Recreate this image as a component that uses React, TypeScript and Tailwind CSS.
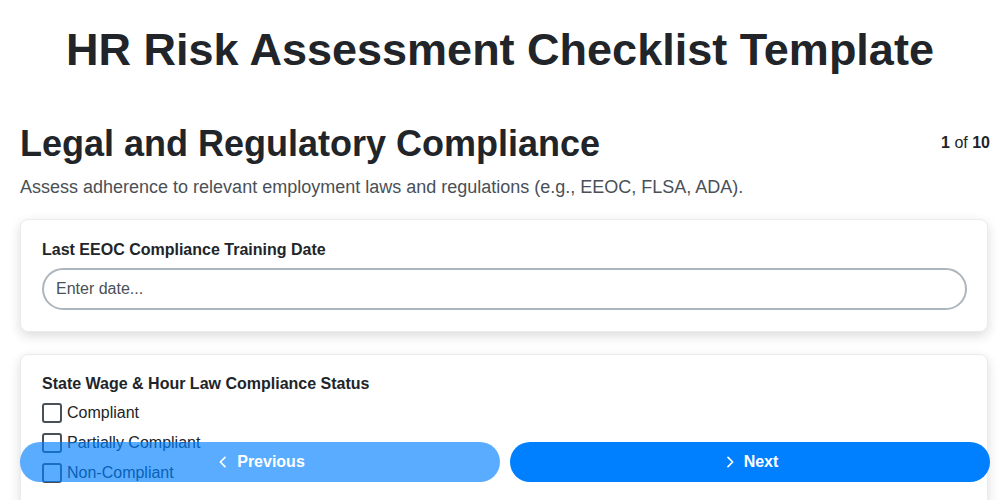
import React from "react";

function Chevron({ dir }: { dir: "left" | "right" }) {
  return (
    <svg width="16" height="16" viewBox="0 0 24 24" fill="none" stroke="currentColor" strokeWidth="2.5" strokeLinecap="round" strokeLinejoin="round">
      {dir === "left" ? <path d="M15 5l-7 7 7 7" /> : <path d="M9 5l7 7-7 7" />}
    </svg>
  );
}

export default function App() {
  const options = ["Compliant", "Partially Compliant", "Non-Compliant"];
  return (
    <div className="min-h-[500px] bg-white text-[#212529]" style={{ fontFamily: '"Liberation Sans", Arial, sans-serif' }}>
      <h1 className="pt-[23px] text-center text-[45px] font-bold leading-[54px]">HR Risk Assessment Checklist Template</h1>
      <div className="pl-5 pr-[10px]">
        <div className="mt-[45px] flex items-start justify-between">
          <h2 className="text-[36px] font-bold leading-[44px]">Legal and Regulatory Compliance</h2>
          <div className="mt-[11px] text-[16px] leading-[20px]">
            <span className="font-bold">1</span> of <span className="font-bold">10</span>
          </div>
        </div>
        <p className="mt-[9px] text-[18px] leading-[24px] text-[#495057]">
          Assess adherence to relevant employment laws and regulations (e.g., EEOC, FLSA, ADA).
        </p>
        <div className="mt-[20px] mr-[2px] rounded-lg border border-[#e9ecef] bg-white pl-[21px] pr-5 pb-[21px] pt-[18px] shadow-[0_4px_12px_rgba(0,0,0,0.14)]">
          <label className="block text-[16px] font-bold leading-[24px]">Last EEOC Compliance Training Date</label>
          <input
            type="text"
            placeholder="Enter date..."
            className="mt-[6px] block h-[42px] w-full rounded-full border-2 border-[#adb5bd] bg-white px-3 text-[16px] text-[#212529] outline-none placeholder:text-[#495057]"
          />
        </div>
        <div className="mt-[22px] mr-[2px] rounded-lg border border-[#e9ecef] bg-white pl-[21px] pr-5 pb-5 pt-[17px] shadow-[0_4px_12px_rgba(0,0,0,0.14)]">
          <div className="text-[16px] font-bold leading-[24px]">State Wage &amp; Hour Law Compliance Status</div>
          <div className="mt-0.5 flex flex-col">
            {options.map((o) => (
              <label key={o} className="flex h-[30px] items-center gap-[5px] text-[16px]">
                <span className="block h-[20px] w-[20px] rounded-[3px] border-2 border-[#495057] bg-white" />
                <span>{o}</span>
              </label>
            ))}
          </div>
        </div>
        <div className="h-40" />
      </div>
      <div className="fixed bottom-[18px] left-5 right-[10px] flex gap-[10px]">
        <button className="flex h-[40px] flex-1 items-center justify-center gap-[6px] rounded-full bg-[#0080ff] text-[16px] font-bold text-white opacity-65">
          <Chevron dir="left" />
          Previous
        </button>
        <button className="flex h-[40px] flex-1 items-center justify-center gap-[6px] rounded-full bg-[#0080ff] text-[16px] font-bold text-white">
          <Chevron dir="right" />
          Next
        </button>
      </div>
    </div>
  );
}
